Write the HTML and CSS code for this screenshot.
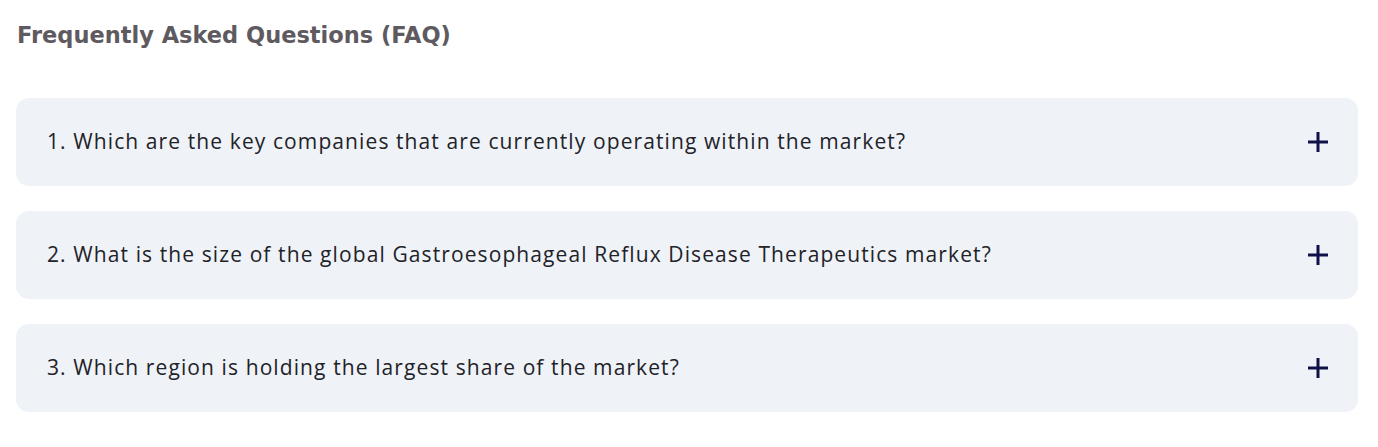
FILE: index.html
```html
<!DOCTYPE html>
<html lang="en">
<head>
<meta charset="utf-8">
<title>FAQ</title>
<link rel="stylesheet" href="styles.css">
</head>
<body>
<section class="faq">
  <h2 class="faq-title">Frequently Asked Questions (FAQ)</h2>
  <div class="faq-list">
    <div class="faq-item">
      <span class="faq-q">1. Which are the key companies that are currently operating within the market?</span>
      <svg class="faq-icon" viewBox="0 0 22 22" width="22" height="22" aria-hidden="true"><path d="M11 1v20M1 11h20" stroke="#0f1048" stroke-width="3" fill="none"/></svg>
    </div>
    <div class="faq-item">
      <span class="faq-q">2. What is the size of the global Gastroesophageal Reflux Disease Therapeutics market?</span>
      <svg class="faq-icon" viewBox="0 0 22 22" width="22" height="22" aria-hidden="true"><path d="M11 1v20M1 11h20" stroke="#0f1048" stroke-width="3" fill="none"/></svg>
    </div>
    <div class="faq-item">
      <span class="faq-q">3. Which region is holding the largest share of the market?</span>
      <svg class="faq-icon" viewBox="0 0 22 22" width="22" height="22" aria-hidden="true"><path d="M11 1v20M1 11h20" stroke="#0f1048" stroke-width="3" fill="none"/></svg>
    </div>
  </div>
</section>
</body>
</html>
```
FILE: styles.css
```css
* { box-sizing: border-box; }
body {
  margin: 0;
  background: #ffffff;
}
.faq {
  padding: 0 20px 0 16px;
}
.faq-title {
  margin: 0;
  padding: 20px 0 0 1px;
  height: 98px;
  font-family: "DejaVu Sans", sans-serif;
  font-weight: 700;
  font-size: 22.5px;
  color: #5e5a60;
  line-height: 30px;
}
.faq-list {
  display: flex;
  flex-direction: column;
  gap: 25px;
}
.faq-item {
  display: flex;
  align-items: center;
  justify-content: space-between;
  height: 88px;
  padding: 0 29px 0 31px;
  background: #eff2f7;
  border-radius: 13px;
}
.faq-q {
  font-family: "Open Sans", sans-serif;
  font-size: 21px;
  letter-spacing: 1.1px;
  color: #222228;
  margin-top: -3px;
}
.faq-icon { flex: none; }
```
